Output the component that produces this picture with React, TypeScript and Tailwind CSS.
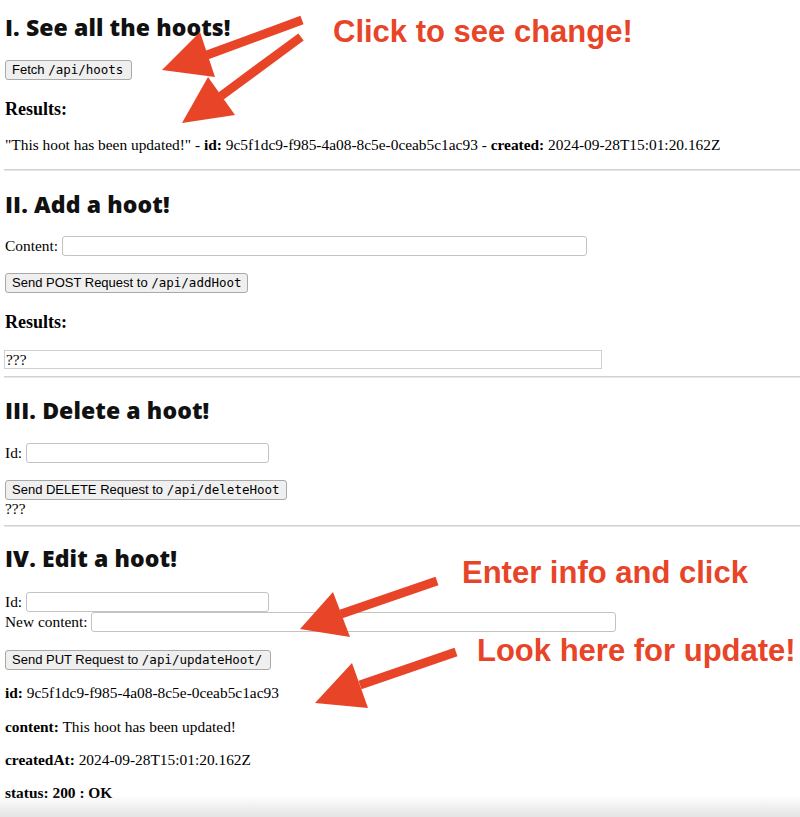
import React from "react";

const serif = { fontFamily: '"Liberation Serif", "Times New Roman", serif' };

function Btn({ w, label, code }: { w: string; label: string; code: string }) {
  return (
    <button
      className={`block h-[20px] ${w} rounded-[3px] border border-[#a9a9a9] bg-[#efefef] px-[6px] text-left text-[13px] leading-[18px] text-black font-['Liberation_Sans',Arial,sans-serif] whitespace-nowrap`}
    >
      {label}
      <span className="font-['DejaVu_Sans_Mono',monospace] text-[12.5px]">{code}</span>
    </button>
  );
}

function Arrow({ sx, sy, bx, by, tx, ty, ax, ay, cx, cy }: any) {
  return (
    <g>
      <line x1={sx} y1={sy} x2={bx} y2={by} stroke="#e84428" strokeWidth={9} strokeLinecap="butt" />
      <polygon points={`${tx},${ty} ${ax},${ay} ${cx},${cy}`} fill="#e84428" />
    </g>
  );
}

export default function App() {
  const h2 = "h-[28px] text-[23px] leading-[28px] font-extrabold tracking-[0.1px] text-[#111] font-['Open_Sans','Lato',sans-serif] whitespace-nowrap";
  const h3 = "h-[22px] text-[18px] leading-[22px] font-bold";
  const input = "h-[20px] rounded-[3px] border border-[#c3c3c3] bg-white";
  const note = "pointer-events-none absolute whitespace-nowrap text-[31px] font-bold leading-[30px] text-[#e84428] font-['Liberation_Sans',Arial,sans-serif]";
  const hr = "-ml-[1px] h-[2px] border-0 border-t border-b border-t-[#d2d2d2] border-b-[#e6e6e6]";
  return (
    <div className="relative h-[817px] w-[800px] overflow-hidden bg-white text-[15.4px] text-black" style={serif}>
      <div className="pl-[5px] pt-[13px]">
        <h2 className={h2}>I. See all the hoots!</h2>
        <div className="mt-[19px]">
          <Btn w="w-[127px]" label="Fetch " code="/api/hoots" />
        </div>
        <h3 className={`mt-[18px] ${h3}`}>Results:</h3>
        <p className="mt-[15px] h-[20px] leading-[20px] whitespace-nowrap">
          "This hoot has been updated!" - <b>id:</b> 9c5f1dc9-f985-4a08-8c5e-0ceab5c1ac93 - <b>created:</b>{" "}
          2024-09-28T15:01:20.162Z
        </p>
        <hr className={`mt-[14px] ${hr}`} />

        <h2 className={`mt-[19px] ${h2}`}>II. Add a hoot!</h2>
        <div className="mt-[18px] flex h-[20px] items-center">
          <span className="mr-[4px] leading-[20px]">Content:</span>
          <input className={`${input} w-[525px]`} />
        </div>
        <div className="mt-[17px]">
          <Btn w="w-[243px]" label="Send POST Request to " code="/api/addHoot" />
        </div>
        <h3 className={`mt-[18px] ${h3}`}>Results:</h3>
        <div className="-ml-[1px] mt-[17px] h-[19px] w-[598px] border border-[#cfcfcf] pl-[1px] leading-[17px]">???</div>
        <hr className={`mt-[7px] ${hr}`} />

        <h2 className={`mt-[18px] ${h2}`}>III. Delete a hoot!</h2>
        <div className="mt-[19px] flex h-[20px] items-center">
          <span className="mr-[4px] leading-[20px]">Id:</span>
          <input className={`${input} w-[243px]`} />
        </div>
        <div className="mt-[17px]">
          <Btn w="w-[282px]" label="Send DELETE Request to " code="/api/deleteHoot" />
        </div>
        <div className="h-[18px] leading-[18px]">???</div>
        <hr className={`mt-[7px] ${hr}`} />

        <h2 className={`mt-[17px] ${h2}`}>IV. Edit a hoot!</h2>
        <div className="mt-[20px] flex h-[20px] items-center">
          <span className="mr-[4px] leading-[20px]">Id:</span>
          <input className={`${input} w-[243px]`} />
        </div>
        <div className="flex h-[20px] items-center">
          <span className="mr-[4px] leading-[20px]">New content:</span>
          <input className={`${input} w-[525px]`} />
        </div>
        <div className="mt-[18px]">
          <Btn w="w-[266px]" label="Send PUT Request to " code="/api/updateHoot/" />
        </div>
        <p className="mt-[13px] h-[20px] leading-[20px]">
          <b>id:</b> 9c5f1dc9-f985-4a08-8c5e-0ceab5c1ac93
        </p>
        <p className="mt-[14px] h-[20px] leading-[20px]">
          <b>content:</b> This hoot has been updated!
        </p>
        <p className="mt-[13px] h-[20px] leading-[20px]">
          <b>createdAt:</b> 2024-09-28T15:01:20.162Z
        </p>
        <p className="mt-[13px] h-[20px] leading-[20px] font-bold">status: 200 : OK</p>
      </div>

      <div className={`${note} left-[333px] top-[17px]`}>Click to see change!</div>
      <div className={`${note} left-[462px] top-[558px]`}>Enter info and click</div>
      <div className={`${note} left-[477px] top-[636px]`}>Look here for update!</div>

      <svg className="pointer-events-none absolute left-0 top-0" width="800" height="817" viewBox="0 0 800 817">
        <Arrow sx={302} sy={20} bx={207} by={55} tx={162} ty={70} ax={200} ay={32} cx={215} cy={77} />
        <Arrow sx={301} sy={37} bx={221} by={96} tx={182} ty={123} ax={208} ay={77} cx={235} cy={115} />
        <Arrow sx={437} sy={581} bx={341} by={614} tx={300} ty={629} ax={333} ay={592} cx={350} cy={637} />
        <Arrow sx={456} sy={652} bx={360} by={685} tx={315} ty={703} ax={352} ay={663} cx={368} cy={708} />
      </svg>

      <div className="pointer-events-none absolute bottom-0 left-0 h-[22px] w-full bg-gradient-to-b from-transparent to-[#e4e4e4]" />
    </div>
  );
}
